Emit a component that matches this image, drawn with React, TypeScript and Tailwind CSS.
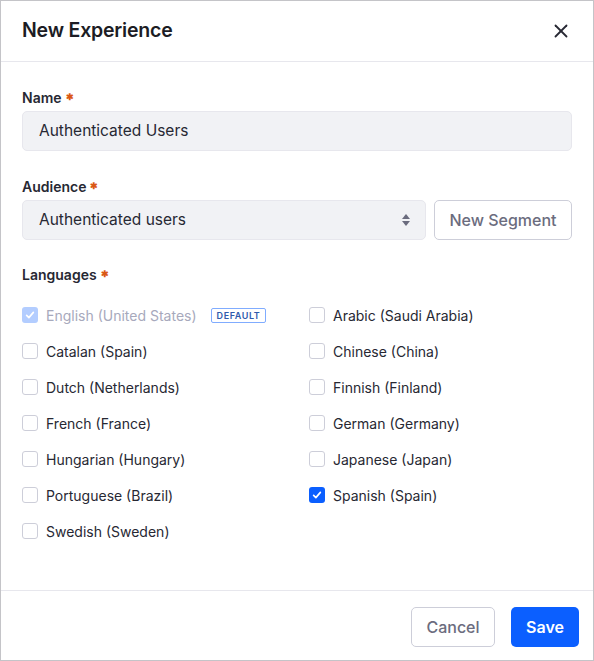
import { X } from 'lucide-react';

const languages: [string, boolean][] = [
    ['English (United States)', true],
    ['Arabic (Saudi Arabia)', false],
    ['Catalan (Spain)', false],
    ['Chinese (China)', false],
    ['Dutch (Netherlands)', false],
    ['Finnish (Finland)', false],
    ['French (France)', false],
    ['German (Germany)', false],
    ['Hungarian (Hungary)', false],
    ['Japanese (Japan)', false],
    ['Portuguese (Brazil)', false],
    ['Spanish (Spain)', true],
    ['Swedish (Sweden)', false],
];

const Required = () => <span className="ml-1 text-[9px] text-[#da5914] relative top-[-1px]">✱</span>;

function Check({ checked, disabled }: { checked: boolean; disabled?: boolean }) {
    if (checked) {
        return (
            <span className={`flex h-4 w-4 items-center justify-center rounded-[3px] ${disabled ? 'bg-[#b3cdff]' : 'bg-[#0b5fff]'}`}>
                <svg viewBox="0 0 16 16" className="h-3 w-3" fill="none" stroke="white" strokeWidth="2.2" strokeLinecap="round" strokeLinejoin="round">
                    <path d="M3.5 8.5l3 3 6-7" />
                </svg>
            </span>
        );
    }
    return <span className="h-4 w-4 rounded-[3px] border border-[#cdced9] bg-white"></span>;
}

export default function App() {
    return (
        <div className="flex h-[661px] w-[594px] flex-col border border-[#c4c4c8] bg-white text-[#272833]" style={{ fontFamily: 'Inter, "Noto Sans", sans-serif' }}>
            {/* header */}
            <div className="flex h-[61px] items-center justify-between border-b border-[#e7e7ed] pl-[21px] pr-[21px]">
                <h1 className="text-[19.5px] font-semibold tracking-[-0.2px] text-[#1c1c24]">New Experience</h1>
                <X className="h-[22px] w-[22px] text-[#272833]" strokeWidth={2} />
            </div>

            {/* body */}
            <div className="flex flex-1 flex-col px-[21px] pt-[25px]">
                <label className="flex items-center text-[14px] font-semibold">Name<Required /></label>
                <div className="mt-[3px] flex h-10 items-center rounded-[5px] border border-[#e7e7ed] bg-[#f1f2f5] px-4 text-[15.5px]">Authenticated Users</div>

                <label className="mt-[25px] flex items-center text-[14px] font-semibold">Audience<Required /></label>
                <div className="mt-[3px] flex gap-2">
                    <div className="flex h-10 flex-1 items-center justify-between rounded-[5px] border border-[#e7e7ed] bg-[#f1f2f5] pl-4 pr-[14px] text-[15.5px]">
                        <span>Authenticated users</span>
                        <svg viewBox="0 0 10 14" className="h-[14px] w-[10px]" fill="#6b6c7e">
                            <path d="M5 1L9 6H1z" />
                            <path d="M5 13L1 8h8z" />
                        </svg>
                    </div>
                    <button className="h-10 w-[138px] rounded-[5px] border border-[#cdced9] bg-white text-[16px] font-medium text-[#6b6c7e]">New Segment</button>
                </div>

                <label className="mt-[24px] flex items-center text-[14px] font-semibold">Languages<Required /></label>
                <div className="mt-[20px] grid grid-cols-2 gap-x-0 gap-y-[16px]">
                    {languages.map(([name, checked], i) => {
                        const isDefault = i === 0;
                        return (
                            <div key={name} className={`flex h-5 items-center gap-2 text-[14px] ${i % 2 === 1 ? 'pl-[12px]' : ''}`}>
                                <Check checked={checked} disabled={isDefault} />
                                <span className={isDefault ? 'text-[#a7a9bc]' : ''}>{name}</span>
                                {isDefault && (
                                    <span className="ml-[6px] rounded-[2px] border border-[#80acff] px-[5px] text-[9px] font-semibold leading-[13px] tracking-[0.6px] text-[#2e5aac]">DEFAULT</span>
                                )}
                            </div>
                        );
                    })}
                </div>
            </div>

            {/* footer */}
            <div className="flex h-[70px] items-center justify-end gap-4 border-t border-[#e7e7ed] pr-[14px] pt-[2px]">
                <button className="h-10 w-[84px] rounded-[5px] border border-[#cdced9] bg-white text-[16px] font-medium text-[#6b6c7e]">Cancel</button>
                <button className="h-10 w-[68px] rounded-[5px] bg-[#0b5fff] text-[16px] font-semibold text-white">Save</button>
            </div>
        </div>
    );
}
